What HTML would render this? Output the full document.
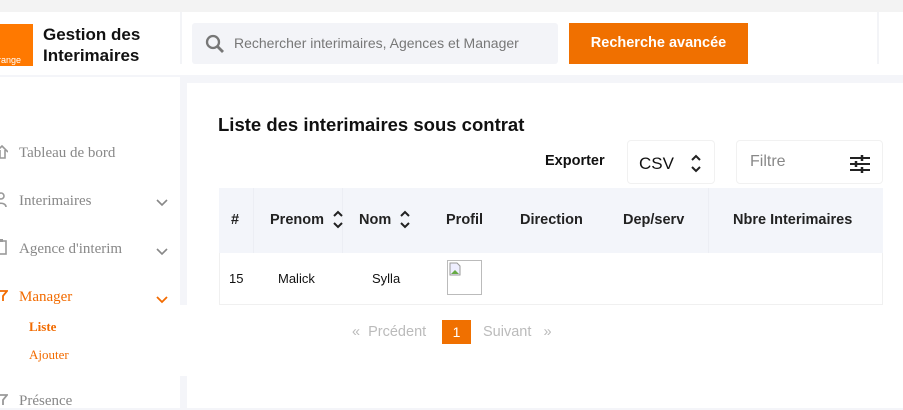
<!DOCTYPE html><html><head><style>
body{margin:0;width:903px;height:408px;overflow:hidden;background:#f4f5f9;font-family:"Liberation Sans",sans-serif;position:relative}
div,span,svg{position:absolute;box-sizing:border-box}
.sb{font-family:"Liberation Serif",serif;font-size:15px;color:#888}
.th{font-weight:bold;font-size:14.5px;color:#222;top:212px}
.td{font-size:13px;color:#111;top:271px}
</style></head><body>
<div style="left:0;top:0;width:903px;height:12px;background:#f3f3f3"></div>
<div style="left:0;top:12px;width:903px;height:63px;background:#fff"></div>
<div style="left:180px;top:12px;width:2px;height:52px;background:#f3f4f7"></div>
<div style="left:877px;top:12px;width:2px;height:52px;background:#f3f4f7"></div>
<div style="left:0;top:24px;width:33px;height:42px;background:#ff7900"><span style="left:-2px;bottom:1px;font-size:9px;color:#fff">range</span></div>
<div style="left:43px;top:24px;font-weight:bold;font-size:17px;line-height:21px;color:#111">Gestion des<br>Interimaires</div>
<div style="left:192px;top:23px;width:366px;height:41px;background:#f3f4f8;border-radius:3px"></div>
<svg style="left:205px;top:34px" width="20" height="20"><circle cx="8" cy="8" r="6" fill="none" stroke="#777" stroke-width="2.3"/><path d="M12.5 12.5L18 18" stroke="#777" stroke-width="2.8"/></svg>
<div style="left:234px;top:35px;font-size:14px;color:#777">Rechercher interimaires, Agences et Manager</div>
<div style="left:569px;top:23px;width:179px;height:41px;background:#f07000;color:#fff;font-weight:bold;font-size:14.5px;line-height:41px;text-align:center">Recherche avancée</div>
<div style="left:0;top:77px;width:180px;height:331px;background:#fff"></div>
<div style="left:180px;top:305px;width:7px;height:71px;background:#fff"></div>
<div style="left:187px;top:83px;width:716px;height:325px;background:#fff"></div>
<div class="sb" style="left:19px;top:145px">Tableau de bord</div>
<div class="sb" style="left:19px;top:193px">Interimaires</div>
<div class="sb" style="left:19px;top:241px">Agence d'interim</div>
<div class="sb" style="left:19px;top:289px;color:#f26b00">Manager</div>
<div class="sb" style="left:29px;top:319px;color:#f26b00;font-size:13px;font-weight:bold">Liste</div>
<div class="sb" style="left:29px;top:347px;color:#f26b00;font-size:13px">Ajouter</div>
<div class="sb" style="left:19px;top:393px">Présence</div>
<svg style="left:0;top:145px" width="8" height="14"><path d="M-4 7L2 1L8 7M0 5v8h5V5" fill="none" stroke="#999" stroke-width="1.6"/></svg>
<svg style="left:0;top:192px" width="8" height="16"><circle cx="1" cy="4" r="3" fill="none" stroke="#999" stroke-width="1.6"/><path d="M-4 15c0-5 10-5 10 0" fill="none" stroke="#999" stroke-width="1.6"/></svg>
<svg style="left:0;top:238px" width="8" height="18"><rect x="-4" y="3" width="10" height="13" fill="none" stroke="#999" stroke-width="1.6"/><path d="M-1 1h4v3h-4z" fill="#999"/></svg>
<svg style="left:0;top:290px" width="8" height="12"><path d="M-4 1h11L3 6v5" fill="none" stroke="#f26b00" stroke-width="1.8"/></svg>
<svg style="left:0;top:394px" width="8" height="12"><path d="M-4 1h11L3 6v5" fill="none" stroke="#999" stroke-width="1.8"/></svg>
<svg style="left:156px;top:199px" width="12" height="8"><path d="M1 1l5 5l5-5" fill="none" stroke="#888" stroke-width="1.6"/></svg>
<svg style="left:156px;top:248px" width="12" height="8"><path d="M1 1l5 5l5-5" fill="none" stroke="#888" stroke-width="1.6"/></svg>
<svg style="left:156px;top:296px" width="12" height="8"><path d="M1 1l5 5l5-5" fill="none" stroke="#f26b00" stroke-width="1.8"/></svg>
<div style="left:218px;top:114px;font-weight:bold;font-size:18.5px;color:#111">Liste des interimaires sous contrat</div>
<div style="left:545px;top:153px;font-weight:bold;font-size:14.5px;color:#111">Exporter</div>
<div style="left:627px;top:140px;width:88px;height:44px;border:1px solid #f1f1f1;border-radius:4px"></div>
<div style="left:639px;top:154px;font-size:17px;color:#111">CSV</div>
<svg style="left:690px;top:154px" width="12" height="20"><path d="M2 6l4-4l4 4M2 13l4 4l4-4" fill="none" stroke="#222" stroke-width="2"/></svg>
<div style="left:736px;top:140px;width:147px;height:44px;border:1px solid #f1f1f1;border-radius:4px"></div>
<div style="left:750px;top:153px;font-size:16px;color:#888">Filtre</div>
<svg style="left:849px;top:154px" width="22" height="20"><path d="M1 4h20M1 10h20M1 16h20" stroke="#222" stroke-width="2"/><path d="M13 1v6M7 7v6M13 13v6" stroke="#222" stroke-width="2.5"/></svg>
<div style="left:219px;top:188px;width:664px;height:65px;background:#f3f5fa"></div>
<div style="left:253px;top:188px;width:1px;height:65px;background:#eceef4"></div>
<div style="left:342px;top:188px;width:1px;height:65px;background:#eceef4"></div>
<div style="left:708px;top:188px;width:1px;height:65px;background:#eceef4"></div>
<div style="left:219px;top:253px;width:664px;height:52px;border:1px solid #f0f0f0;border-top:none"></div>
<div class="th" style="left:231px">#</div>
<div class="th" style="left:270px">Prenom</div>
<div class="th" style="left:359px">Nom</div>
<div class="th" style="left:446px">Profil</div>
<div class="th" style="left:520px">Direction</div>
<div class="th" style="left:623px">Dep/serv</div>
<div class="th" style="left:733px">Nbre Interimaires</div>
<svg style="left:332px;top:210px" width="12" height="20"><path d="M2 6l4-4l4 4M2 13l4 4l4-4" fill="none" stroke="#222" stroke-width="2"/></svg>
<svg style="left:399px;top:210px" width="12" height="20"><path d="M2 6l4-4l4 4M2 13l4 4l4-4" fill="none" stroke="#222" stroke-width="2"/></svg>
<div class="td" style="left:229px">15</div>
<div class="td" style="left:278px">Malick</div>
<div class="td" style="left:372px">Sylla</div>
<div style="left:447px;top:260px;width:35px;height:35px;border:1px solid #bbb"></div>
<svg style="left:449px;top:262px" width="12" height="14"><path d="M1 1h7l3 3v9H1z" fill="#eef" stroke="#999"/><path d="M2 12l4-4l4 4z" fill="#6a4"/></svg>
<div style="left:352px;top:324px;font-size:14.5px;color:#bbb">«&nbsp;&nbsp;Prcédent</div>
<div style="left:442px;top:320px;width:29px;height:24px;background:#f07000;color:#fff;font-size:14px;line-height:24px;text-align:center">1</div>
<div style="left:483px;top:324px;font-size:14.5px;color:#bbb">Suivant&nbsp;&nbsp;&nbsp;»</div>
</body></html>
